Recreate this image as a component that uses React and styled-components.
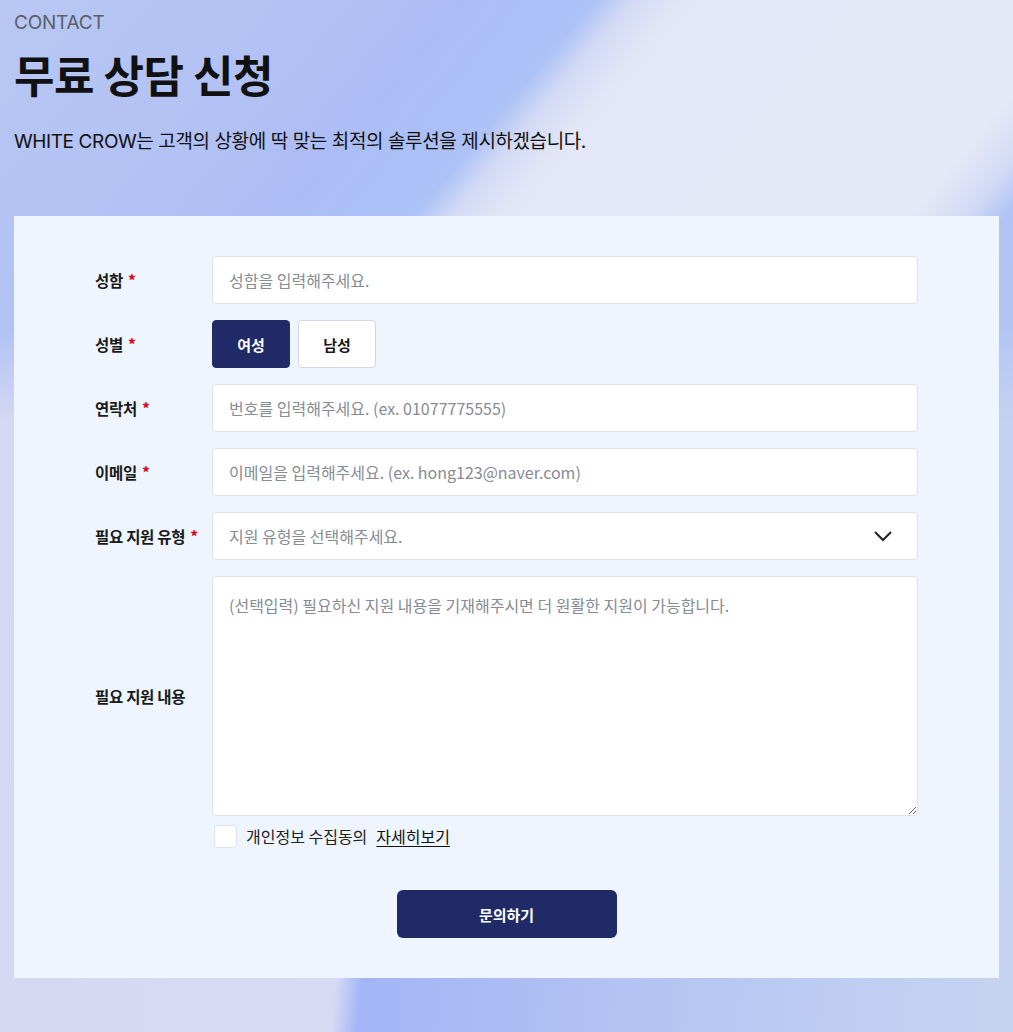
import React, { useState } from "react";
import styled, { createGlobalStyle } from "styled-components";

const Global = createGlobalStyle`
  html, body { margin: 0; padding: 0; }
  body { font-family: "Noto Sans CJK KR", "Noto Sans", sans-serif; }
  * { box-sizing: border-box; }
`;

const Page = styled.div`
  position: relative;
  width: 1013px;
  min-height: 1032px;
  padding: 0 14px 54px;
  background: linear-gradient(95deg, #d5d8f2 0%, #d7daf3 38.2%, #a2b5f6 40.6%, #a6b8f5 46%, #b3c3f3 65%, #bccbf2 80%, #c6d4f0 100%);
  isolation: isolate;

  &::before {
    content: "";
    position: absolute;
    left: 0;
    top: 0;
    width: 100%;
    height: 420px;
    z-index: -1;
    background: linear-gradient(130deg, #b8c7f3 0%, #b1c1f4 25%, #adbdf5 33%, #aac0f7 40%, #adc2f6 43.6%, #d3daf5 46.4%, #e2e6f6 50%, #e5e8f6 80%, #d2daf5 84%, #b0c3f5 87%, #b6c7f3 100%);
    -webkit-mask-image: linear-gradient(to bottom, #000 330px, transparent 420px);
    mask-image: linear-gradient(to bottom, #000 330px, transparent 420px);
  }
`;

const Header = styled.header`
  padding-top: 10px;
  display: flex;
  flex-direction: column;
`;

const Eyebrow = styled.div`
  font-family: Inter, "Noto Sans CJK KR", sans-serif;
  font-size: 19px;
  line-height: 26px;
  color: #5b5f68;
  letter-spacing: -0.2px;
`;

const Title = styled.h1`
  margin: 12px 0 0;
  font-size: 44px;
  line-height: 52px;
  font-weight: 700;
  color: #111;
  letter-spacing: -0.5px;
`;

const Lead = styled.p`
  margin: 29px 0 0;
  font-family: Inter, "Noto Sans CJK KR", sans-serif;
  font-size: 19px;
  line-height: 26px;
  color: #111;
  letter-spacing: -0.4px;
`;

const Card = styled.form`
  margin-top: 61px;
  background: #eef5ff;
  padding: 40px 81px 40px;
  display: flex;
  flex-direction: column;
  gap: 16px;
`;

const Row = styled.div`
  display: grid;
  grid-template-columns: 117px 1fr;
  align-items: center;
`;

const Label = styled.label`
  font-size: 15.5px;
  font-weight: 700;
  color: #1a1a1a;
  letter-spacing: -0.3px;
`;

const Star = styled.span`
  color: #e50012;
  margin-left: 5px;
`;

const Field = styled.input`
  height: 48px;
  width: 100%;
  border: 1px solid #dfe2e8;
  border-radius: 4px;
  background: #fff;
  padding: 0 16px;
  font-family: "Noto Sans CJK KR", sans-serif;
  font-size: 16px;
  color: #222;
  outline: none;
  &::placeholder { color: #868b94; }
`;

const SelectBox = styled.div`
  height: 48px;
  border: 1px solid #dfe2e8;
  border-radius: 4px;
  background: #fff;
  padding: 0 24px 0 16px;
  display: flex;
  align-items: center;
  justify-content: space-between;
  font-size: 16px;
  color: #868b94;
`;

const Area = styled.textarea`
  height: 240px;
  width: 100%;
  border: 1px solid #dfe2e8;
  border-radius: 4px;
  background: #fff;
  padding: 16px 16px;
  font-family: "Noto Sans CJK KR", sans-serif;
  font-size: 16px;
  line-height: 24px;
  outline: none;
  resize: vertical;
  display: block;
  &::placeholder { color: #868b94; }
`;

const Toggle = styled.div`
  display: flex;
  gap: 8px;
`;

const ToggleBtn = styled.button`
  width: 78px;
  height: 48px;
  border-radius: 4px;
  border: 1px solid ${(p) => (p.$active ? "#1f2a66" : "#d3d6dc")};
  background: ${(p) => (p.$active ? "#1f2a66" : "#fff")};
  color: ${(p) => (p.$active ? "#fff" : "#1a1a1a")};
  font-family: "Noto Sans CJK KR", sans-serif;
  font-size: 15px;
  font-weight: 700;
  cursor: pointer;
`;

const Agree = styled.div`
  margin-top: -8px;
  padding-left: 119px;
  display: flex;
  align-items: center;
  gap: 9px;
  font-size: 16px;
  color: #222;
`;

const Check = styled.span`
  width: 23px;
  height: 23px;
  border: 1px solid #dfe2e8;
  border-radius: 4px;
  background: #fff;
`;

const More = styled.a`
  color: #111;
  text-decoration: underline;
  text-underline-offset: 3px;
`;

const Submit = styled.button`
  align-self: center;
  margin-top: 26px;
  width: 220px;
  height: 48px;
  border: 0;
  border-radius: 6px;
  background: #1f2a66;
  color: #fff;
  font-family: "Noto Sans CJK KR", sans-serif;
  font-size: 15px;
  font-weight: 700;
`;

const Chevron = () => (
  <svg width="20" height="12" viewBox="0 0 20 12" fill="none">
    <path d="M2 2l8 8 8-8" stroke="#222" strokeWidth="2" />
  </svg>
);

export default function App() {
  const [gender, setGender] = useState("f");
  return (
    <Page>
      <Global />
      <Header>
        <Eyebrow>CONTACT</Eyebrow>
        <Title>무료 상담 신청</Title>
        <Lead>WHITE CROW는 고객의 상황에 딱 맞는 최적의 솔루션을 제시하겠습니다.</Lead>
      </Header>
      <Card onSubmit={(e) => e.preventDefault()}>
        <Row>
          <Label>성함<Star>*</Star></Label>
          <Field placeholder="성함을 입력해주세요." />
        </Row>
        <Row>
          <Label>성별<Star>*</Star></Label>
          <Toggle>
            <ToggleBtn type="button" $active={gender === "f"} onClick={() => setGender("f")}>여성</ToggleBtn>
            <ToggleBtn type="button" $active={gender === "m"} onClick={() => setGender("m")}>남성</ToggleBtn>
          </Toggle>
        </Row>
        <Row>
          <Label>연락처<Star>*</Star></Label>
          <Field placeholder="번호를 입력해주세요. (ex. 01077775555)" />
        </Row>
        <Row>
          <Label>이메일<Star>*</Star></Label>
          <Field placeholder="이메일을 입력해주세요. (ex. hong123@naver.com)" />
        </Row>
        <Row>
          <Label>필요 지원 유형<Star>*</Star></Label>
          <SelectBox>
            <span>지원 유형을 선택해주세요.</span>
            <Chevron />
          </SelectBox>
        </Row>
        <Row>
          <Label>필요 지원 내용</Label>
          <Area placeholder="(선택입력) 필요하신 지원 내용을 기재해주시면 더 원활한 지원이 가능합니다." />
        </Row>
        <Agree>
          <Check />
          <span>개인정보 수집동의</span>
          <More>자세히보기</More>
        </Agree>
        <Submit type="submit">문의하기</Submit>
      </Card>
    </Page>
  );
}
